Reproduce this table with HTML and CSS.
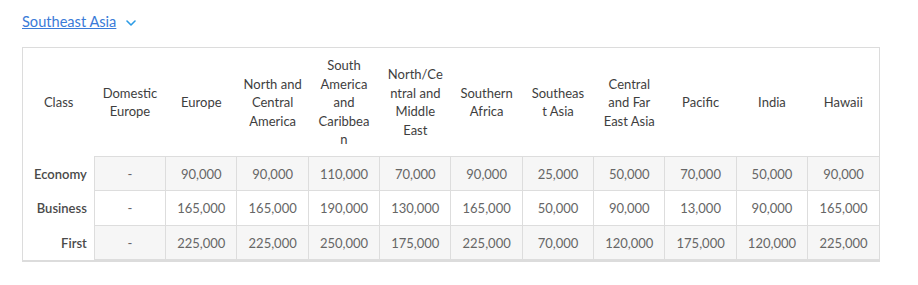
FILE: index.html
```html
<!DOCTYPE html>
<html>
<head>
<meta charset="utf-8">
<link rel="stylesheet" href="styles.css">
</head>
<body>
<div class="page">
  <div class="region">
    <a class="region-link" href="#">Southeast Asia</a>
    <svg class="chevron" width="10" height="6" viewBox="0 0 10 6"><path d="M1 1 L5 5 L9 1" fill="none" stroke="#2b9be5" stroke-width="1.6" stroke-linecap="round" stroke-linejoin="round"/></svg>
  </div>
  <div class="table-wrap">
    <table class="awards">
      <thead>
        <tr>
          <th>Class</th>
          <th>Domestic<br>Europe</th>
          <th>Europe</th>
          <th>North and<br>Central<br>America</th>
          <th>South<br>America<br>and<br>Caribbea<br>n</th>
          <th>North/Ce<br>ntral and<br>Middle<br>East</th>
          <th>Southern<br>Africa</th>
          <th>Southeas<br>t Asia</th>
          <th>Central<br>and Far<br>East Asia</th>
          <th>Pacific</th>
          <th>India</th>
          <th>Hawaii</th>
        </tr>
      </thead>
      <tbody>
        <tr class="shade">
          <th>Economy</th>
          <td>-</td><td>90,000</td><td>90,000</td><td>110,000</td><td>70,000</td><td>90,000</td><td>25,000</td><td>50,000</td><td>70,000</td><td>50,000</td><td>90,000</td>
        </tr>
        <tr>
          <th>Business</th>
          <td>-</td><td>165,000</td><td>165,000</td><td>190,000</td><td>130,000</td><td>165,000</td><td>50,000</td><td>90,000</td><td>13,000</td><td>90,000</td><td>165,000</td>
        </tr>
        <tr class="shade">
          <th>First</th>
          <td>-</td><td>225,000</td><td>225,000</td><td>250,000</td><td>175,000</td><td>225,000</td><td>70,000</td><td>120,000</td><td>175,000</td><td>120,000</td><td>225,000</td>
        </tr>
      </tbody>
    </table>
  </div>
</div>
</body>
</html>
```

FILE: styles.css
```css
html, body {
  margin: 0;
  padding: 0;
  background: #ffffff;
}
body {
  font-family: Lato, "Liberation Sans", sans-serif;
}
.page {
  padding: 12px 38px 0 22px;
}
.region {
  display: flex;
  align-items: center;
  gap: 10px;
  height: 20px;
}
.region-link {
  font-size: 14.6px;
  color: #3a7bd8;
  text-decoration: underline;
  line-height: 20px;
}
.chevron {
  display: block;
  margin-top: 1px;
}
.table-wrap {
  margin-top: 15px;
  border: 1px solid #dcdcdc;
  border-bottom-width: 2px;
}
.awards {
  width: 100%;
  table-layout: fixed;
  border-collapse: collapse;
  font-size: 13px;
  line-height: 18.5px;
}
.awards th,
.awards td {
  padding: 8px 4px 7px;
  text-align: center;
  vertical-align: middle;
  white-space: nowrap;
}
.awards thead th {
  font-weight: normal;
  color: #3e3e3e;
}
.awards tbody th {
  text-align: right;
  padding-right: 7px;
  font-weight: 600;
  color: #4a4a4a;
}
.awards td {
  border: 1px solid #dddddd;
  color: #666666;
  background: #ffffff;
}
.awards tr.shade td {
  background: #f6f6f6;
}
.awards tr td:last-child {
  border-right: 0;
}
```
